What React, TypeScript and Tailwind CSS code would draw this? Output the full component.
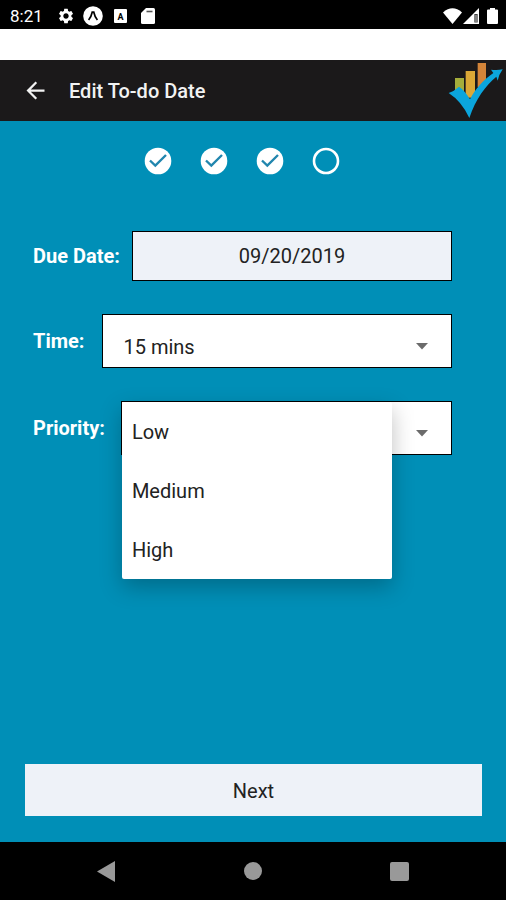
import React, { useState } from 'react';
import { MdArrowBack, MdSettings } from 'react-icons/md';

const TIMES = ['15 mins', '30 mins', '45 mins', '1 hour'];
const PRIORITIES = ['Low', 'Medium', 'High'];

function StatusBar() {
  return (
    <div className="flex h-[29px] items-center justify-between bg-black pl-[10px] pr-2 pt-[2px] text-white">
      <div className="flex items-center">
        <span className="w-[47px] text-[17px] leading-5">8:21</span>
        <MdSettings size={18} />
        <svg className="ml-2" width="20" height="20" viewBox="0 0 20 20">
          <circle cx="10" cy="10" r="9.8" fill="#fff" />
          <path d="M5.6 14 C7.4 12 8.6 9 9.2 6.2 H10.8 C11.4 9 12.6 12 14.4 14" fill="none" stroke="#000" strokeWidth="1.7" />
        </svg>
        <svg className="ml-[11px]" width="13" height="14" viewBox="0 0 13 14">
          <rect width="13" height="14" rx="1" fill="#fff" />
          <text x="6.5" y="10.5" textAnchor="middle" fontSize="9" fontWeight="700" fill="#000">
            A
          </text>
        </svg>
        <svg className="ml-[14px]" width="14" height="16" viewBox="0 0 14 16">
          <path d="M5 0 H12.5 Q14 0 14 1.5 V14.5 Q14 16 12.5 16 H1.5 Q0 16 0 14.5 V5 Z" fill="#fff" />
          <path d="M5.5 3.5 H11.5" stroke="#555" strokeWidth="1.6" />
        </svg>
      </div>
      <div className="flex items-center">
        <svg width="19" height="16" viewBox="0 0 19 16">
          <path d="M0 4.5 Q9.5 -3.8 19 4.5 L9.5 16 Z" fill="#fff" />
        </svg>
        <svg className="ml-px" width="16" height="16" viewBox="0 0 16 16">
          <path d="M0 16 L16 0 V16 Z" fill="#fff" />
          <path d="M11.5 6 H14.5 V14.5 H11.5 Z" fill="#000" />
          <path d="M13 6.5 V14.5" stroke="#fff" strokeWidth="1" />
        </svg>
        <svg className="ml-2" width="11" height="16" viewBox="0 0 11 16">
          <path d="M3 0 H8 V1.5 H10 Q11 1.5 11 2.5 V15 Q11 16 10 16 H1 Q0 16 0 15 V2.5 Q0 1.5 1 1.5 H3 Z" fill="#fff" />
        </svg>
      </div>
    </div>
  );
}

function Logo() {
  return (
    <svg width="56" height="57" viewBox="55 20 168 171" aria-label="Logo">
      <rect x="76" y="68" width="27" height="50" fill="#a5ad3b" />
      <rect x="108" y="47" width="28" height="80" fill="#dba836" />
      <rect x="144" y="23" width="25" height="72" fill="#d38439" />
      <path
        d="M57 113 Q74 107 88 94 Q106 106 121 132 C138 99 161 74 191 53 L184 43 Q202 46 219 42 Q208 57 204 76 L200 64 C168 91 138 130 119 188 Q96 138 57 113 Z"
        fill="#0ba5dc"
      />
    </svg>
  );
}

function Header() {
  return (
    <header className="flex h-[61px] items-center bg-[#1b191a] pl-[22px] pr-[2px] text-[#f2f2f2]">
      <button type="button" aria-label="Back">
        <MdArrowBack size={27} />
      </button>
      <h1 className="ml-5 flex-1 text-[20px] font-medium leading-6">Edit To-do Date</h1>
      <Logo />
    </header>
  );
}

function Step({ done }: { done: boolean }) {
  return (
    <svg width="28" height="28" viewBox="0 0 28 28">
      {done ? (
        <>
          <circle cx="14" cy="14" r="13.3" fill="#fff" />
          <path d="M6 13.5 L11.3 18.5 L22 8" fill="none" stroke="#2186ae" strokeWidth="2.4" />
        </>
      ) : (
        <circle cx="14" cy="14" r="12" fill="none" stroke="#fff" strokeWidth="2.6" />
      )}
    </svg>
  );
}

function Caret() {
  return (
    <svg className="pointer-events-none absolute right-6 top-[29px]" width="12" height="7" viewBox="0 0 12 7">
      <path d="M0 0 H12 L6 6.5 Z" fill="#6b6b6b" />
    </svg>
  );
}

export default function App() {
  const [time, setTime] = useState('15 mins');
  const [priority, setPriority] = useState('Low');
  const [open, setOpen] = useState(true);

  const choose = (value: string) => {
    setPriority(value);
    setOpen(false);
  };

  return (
    <div className="flex min-h-screen flex-col bg-[#008fb7] font-['Roboto',sans-serif] text-[20px] leading-6">
      <StatusBar />
      <div className="h-[31px] bg-white" />
      <Header />

      <main className="flex flex-1 flex-col pt-[26px]">
        <div className="flex justify-center gap-7 pr-[23px]">
          <Step done />
          <Step done />
          <Step done />
          <Step done={false} />
        </div>

        <form className="mt-14 flex flex-col gap-[33px] pl-[33px] pr-[54px]">
          <div className="flex items-center gap-3">
            <label htmlFor="due" className="font-bold text-white">Due Date:</label>
            <button id="due" type="button" className="h-[50px] flex-1 border border-black bg-[#eef2f8] text-[#222]">
              09/20/2019
            </button>
          </div>

          <div className="flex items-center gap-[18px]">
            <label htmlFor="time" className="font-bold text-white">Time:</label>
            <div className="relative flex-1">
              <select
                id="time"
                value={time}
                onChange={(e) => setTime(e.target.value)}
                className="block h-[54px] w-full appearance-none border border-black bg-white pl-5 pt-[11px] text-[#222]"
              >
                {TIMES.map((t) => (
                  <option key={t}>{t}</option>
                ))}
              </select>
              <Caret />
            </div>
          </div>

          <div className="flex items-center gap-4">
            <label htmlFor="priority" className="font-bold text-white">Priority:</label>
            <div className="relative flex-1">
              <select
                id="priority"
                value={priority}
                onChange={(e) => setPriority(e.target.value)}
                className="block h-[54px] w-full appearance-none border border-black bg-white pl-5 pt-[11px] text-[#222]"
              >
                {PRIORITIES.map((p) => (
                  <option key={p}>{p}</option>
                ))}
              </select>
              <Caret />
              {open && (
                <div className="absolute left-px top-px flex w-[270px] flex-col rounded-[2px] bg-white shadow-[0_8px_22px_rgba(0,0,0,0.25)]">
                  {PRIORITIES.map((p) => (
                    <button
                      key={p}
                      type="button"
                      onClick={() => choose(p)}
                      className="h-[59px] pl-[10px] text-left text-[#222]"
                    >
                      {p}
                    </button>
                  ))}
                </div>
              )}
            </div>
          </div>
        </form>

        <div className="mt-auto flex pb-[26px] pl-[25px] pr-6">
          <button type="button" className="h-[52px] flex-1 bg-[#eef2f8] pt-[2px] text-[#222]">
            Next
          </button>
        </div>
      </main>

      <nav className="flex h-[58px] items-center justify-between bg-black px-[97px]">
        <button type="button" aria-label="Back">
          <svg width="18" height="21" viewBox="0 0 18 21">
            <path d="M0 10.5 L18 0 V21 Z" fill="#999" />
          </svg>
        </button>
        <button type="button" aria-label="Home" className="size-[18px] rounded-full bg-[#999]" />
        <button type="button" aria-label="Recent apps" className="size-[19px] rounded-[2px] bg-[#999]" />
      </nav>
    </div>
  );
}
